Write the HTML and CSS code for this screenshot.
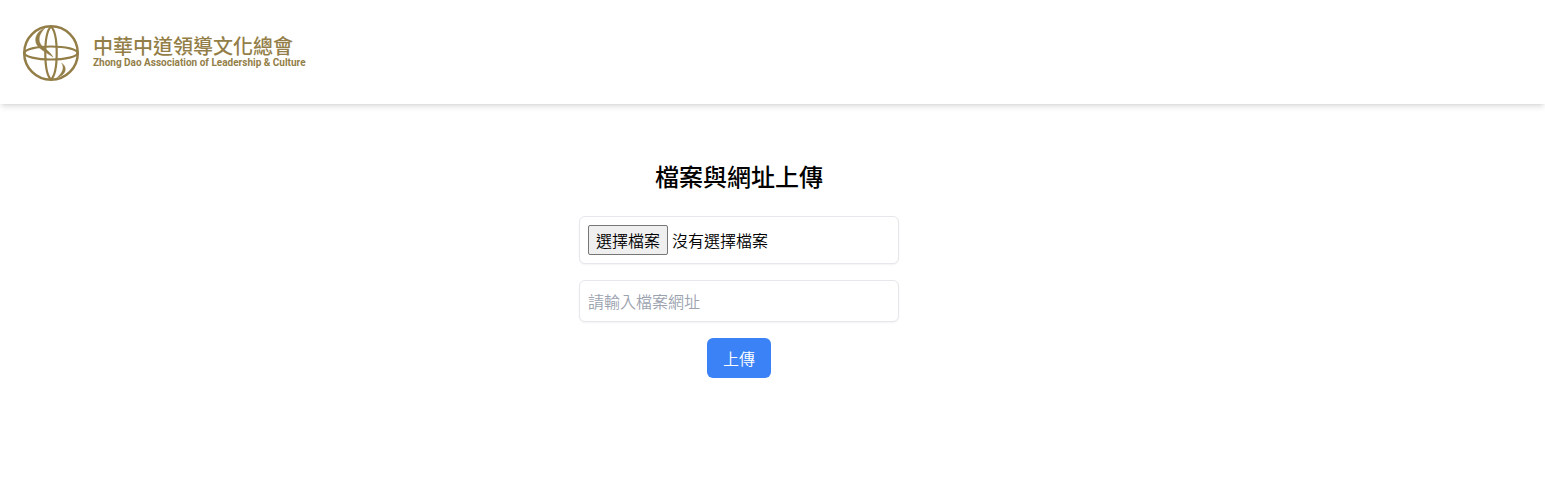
FILE: index.html
```html
<!DOCTYPE html>
<html lang="zh-Hant">
<head>
<meta charset="utf-8">
<meta name="viewport" content="width=device-width, initial-scale=1">
<title>檔案與網址上傳</title>
<link rel="stylesheet" href="styles.css">
</head>
<body>
<header class="header">
  <svg class="logo" viewBox="0 0 58 58" fill="none" stroke="currentColor" aria-hidden="true">
    <circle cx="29" cy="29" r="26.8" stroke-width="2.5"/>
    <ellipse cx="29" cy="29" rx="26.5" ry="6.5" stroke-width="2.2"/>
    <path d="M29 2.500C25.200 6 23.300 16 23.300 29S25.200 52 29 55.500C32.800 52 34.700 42 34.700 29S32.800 6 29 2.500Z" stroke-width="2.200"/>
    <path d="M23 4C13 8 11.500 17 16 22.500C19 26 25 29 31 33C28 27 21 24 18.500 20C15.500 15 18 9 23 4Z" fill="currentColor" stroke-width="0.400"/>
    <path d="M39.500 39C42.500 43 41 49 34.500 54C44.500 51 46 43 39.500 39Z" fill="currentColor" stroke-width="0.300"/>
  </svg>
  <div class="brand">
    <div class="brand-name">中華中道領導文化總會</div>
    <div class="brand-sub" lang="en">Zhong Dao Association of Leadership &amp; Culture</div>
  </div>
</header>
<main class="main">
  <h1 class="title">檔案與網址上傳</h1>
  <form class="form">
    <label class="file field">
      <input class="file-input" type="file" aria-label="選擇檔案">
      <span class="file-button">選擇檔案</span>
      <span>沒有選擇檔案</span>
    </label>
    <input class="url field" type="text" aria-label="檔案網址" placeholder="請輸入檔案網址">
    <button class="submit" type="button">上傳</button>
  </form>
</main>
</body>
</html>
```
FILE: styles.css
```css
* {
  box-sizing: border-box;
}

body {
  margin: 0;
  background: #fff;
  color: #000;
  font: 350 16px/24px "Noto Sans CJK TC", sans-serif;
}

.header {
  display: flex;
  align-items: center;
  gap: 13px;
  padding: 24px 22px 22px;
  color: #937e48;
  box-shadow: 0 4px 6px -1px rgba(0, 0, 0, 0.1), 0 2px 4px -2px rgba(0, 0, 0, 0.1);
}

.logo {
  width: 58px;
  height: 58px;
}

.brand-name {
  font-size: 20px;
  font-weight: 500;
  line-height: 20px;
}

.brand-sub {
  font: 700 10px/14px Roboto, sans-serif;
}

.main {
  display: flex;
  flex-direction: column;
  align-items: center;
  gap: 24px;
  padding: 56px 67px 56px 0;
}

.title {
  margin: 0;
  font-size: 24px;
  font-weight: 500;
  line-height: 32px;
}

.form {
  display: flex;
  flex-direction: column;
  align-items: center;
  gap: 16px;
  width: 100%;
  max-width: 320px;
}

.field {
  width: 100%;
  padding: 8px;
  border: 1px solid #e5e7eb;
  border-radius: 6px;
  background: #fff;
  box-shadow: 0 1px 2px rgba(0, 0, 0, 0.05);
  font: inherit;
}

.file {
  position: relative;
  display: flex;
  align-items: center;
  gap: 4px;
}

.file-input {
  position: absolute;
  inset: 0;
  width: 100%;
  opacity: 0;
  cursor: pointer;
}

.file-button {
  padding: 2px 7px;
  border: 1px solid #767676;
  border-radius: 2px;
  background: #efefef;
}

.url::placeholder {
  color: #9ca3af;
  opacity: 1;
}

.submit {
  padding: 8px 16px;
  border: 0;
  border-radius: 6px;
  background: #3b82f6;
  color: #fff;
  font: inherit;
}
```
